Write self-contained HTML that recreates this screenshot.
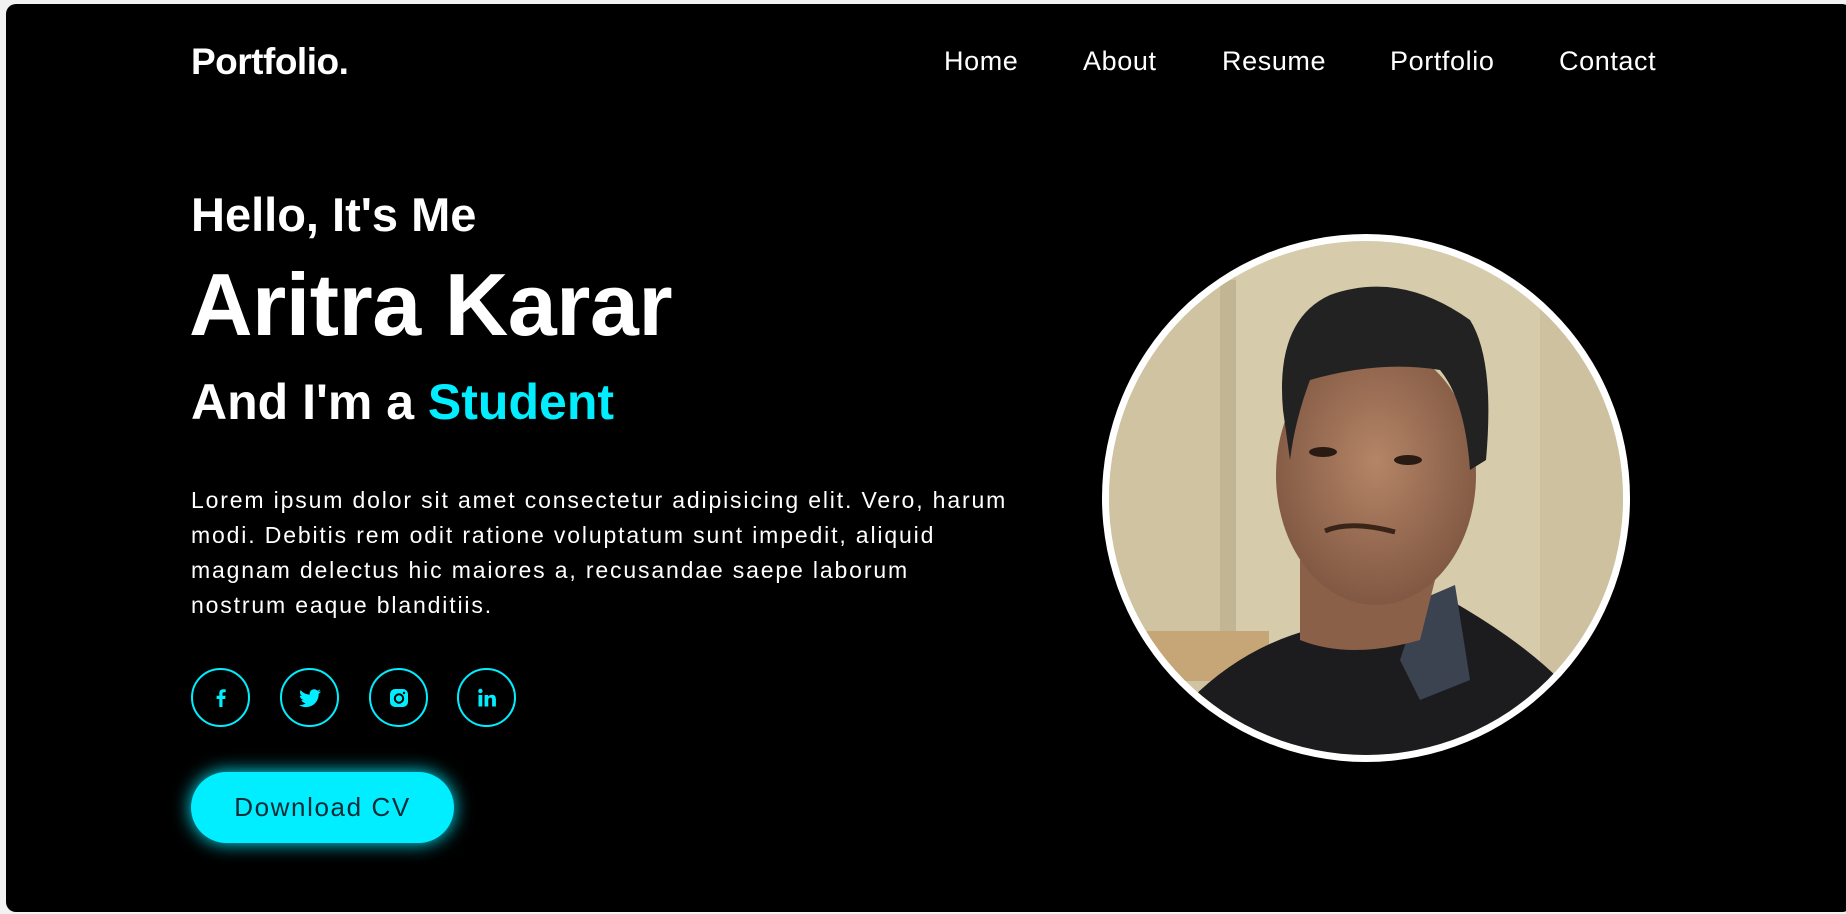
<!DOCTYPE html>
<html><head><meta charset="utf-8"><style>
*{margin:0;padding:0;box-sizing:border-box}
html,body{width:1846px;height:914px;overflow:hidden;background:#f2f2f2;font-family:"Liberation Sans",sans-serif}
.panel{position:absolute;left:6px;top:4px;width:1846px;height:908px;background:#000;border-radius:10px}
.t{position:absolute;color:#fff;white-space:nowrap}
.logo{left:191px;top:41px;font-size:37px;font-weight:700;letter-spacing:-0.5px}
.nav{top:46px;font-size:27px;letter-spacing:0.6px}
.hello{left:191px;top:187px;font-size:47px;font-weight:700}
.name{left:189px;top:254px;font-size:88px;font-weight:700;letter-spacing:-0.5px}
.role{left:191px;top:373px;font-size:50px;font-weight:700}
.role span{color:#0ef}
.para{left:191px;top:483px;font-size:23px;line-height:35px;letter-spacing:1.85px}
.ic{position:absolute;top:668px;width:59px;height:59px;border:2px solid #0ef;border-radius:50%;display:flex;align-items:center;justify-content:center;color:#0ef}
.btn{position:absolute;left:191px;top:772px;width:263px;height:71px;border-radius:36px;background:#0ef;box-shadow:0 0 18px #0ef;color:#0b2b38;font-size:26px;letter-spacing:1.6px;display:flex;align-items:center;justify-content:center}
</style></head><body>
<div class="panel"></div>
<div class="t logo">Portfolio.</div>
<div class="t nav" style="left:944px">Home</div>
<div class="t nav" style="left:1083px">About</div>
<div class="t nav" style="left:1222px">Resume</div>
<div class="t nav" style="left:1390px">Portfolio</div>
<div class="t nav" style="left:1559px">Contact</div>
<div class="t hello">Hello, It's Me</div>
<div class="t name">Aritra Karar</div>
<div class="t role">And I'm a <span>Student</span></div>
<div class="t para">Lorem ipsum dolor sit amet consectetur adipisicing elit. Vero, harum<br>modi. Debitis rem odit ratione voluptatum sunt impedit, aliquid<br>magnam delectus hic maiores a, recusandae saepe laborum<br>nostrum eaque blanditiis.</div>
<div class="ic" style="left:191px"><svg width="24" height="24" viewBox="0 0 24 24"><path fill="#0ef" d="M13.5 21v-8h2.7l.4-3.2h-3.1V7.8c0-.9.3-1.5 1.6-1.5h1.6V3.4c-.3 0-1.3-.1-2.4-.1-2.4 0-4 1.4-4 4.1v2.4H7.6V13h2.7v8z"/></svg></div>
<div class="ic" style="left:280px"><svg width="26" height="26" viewBox="0 0 24 24"><path fill="#0ef" d="M22 5.9c-.7.3-1.5.5-2.4.6.9-.5 1.5-1.3 1.8-2.3-.8.5-1.7.8-2.6 1-.8-.8-1.8-1.3-3-1.3-2.3 0-4.1 1.8-4.1 4.1 0 .3 0 .6.1.9C8.4 8.8 5.4 7.2 3.4 4.7c-.4.6-.6 1.3-.6 2.1 0 1.4.7 2.7 1.8 3.4-.7 0-1.3-.2-1.9-.5 0 2 1.4 3.7 3.3 4.1-.6.2-1.2.2-1.9.1.5 1.6 2 2.8 3.8 2.9-1.4 1.1-3.2 1.8-5.1 1.8H2c1.8 1.2 4 1.8 6.3 1.8 7.5 0 11.7-6.3 11.7-11.700v-.5c.8-.6 1.5-1.3 2-2.2z"/></svg></div>
<div class="ic" style="left:369px"><svg width="24" height="24" viewBox="0 0 24 24"><rect x="3" y="3" width="18" height="18" rx="5" fill="#0ef"/><circle cx="12" cy="12.5" r="4.2" fill="none" stroke="#000" stroke-width="2"/><circle cx="17" cy="7" r="1.2" fill="#000"/></svg></div>
<div class="ic" style="left:457px"><svg width="24" height="24" viewBox="0 0 24 24"><rect x="3.5" y="9" width="3.8" height="11.5" fill="#0ef"/><circle cx="5.4" cy="5" r="2.2" fill="#0ef"/><path fill="#0ef" d="M9.6 9h3.6v1.6c.6-1 1.9-1.9 3.7-1.9 3.3 0 4 2.1 4 4.9v6.9h-3.8v-6.1c0-1.4-.1-2.8-1.8-2.8s-2 1.3-2 2.7v6.2H9.6z"/></svg></div>
<div class="btn">Download CV</div>
<svg style="position:absolute;left:0;top:0" width="1846" height="914">
<defs><clipPath id="c"><circle cx="1366" cy="498" r="257"/></clipPath>
<radialGradient id="f" cx="0.5" cy="0.45" r="0.6"><stop offset="0" stop-color="#b58566"/><stop offset="1" stop-color="#7c5440"/></radialGradient></defs>
<circle cx="1366" cy="498" r="264" fill="#fff"/>
<g clip-path="url(#c)">
<rect x="1100" y="230" width="540" height="540" fill="#d6cbab"/>
<rect x="1100" y="230" width="136" height="540" fill="#cfc3a2"/>
<rect x="1220" y="280" width="16" height="400" fill="#c2b593"/>
<rect x="1540" y="230" width="100" height="540" fill="#cdc1a0"/>
<rect x="1147" y="631" width="122" height="50" fill="#c6a676"/>
<path d="M1190 700 Q1250 640 1330 625 L1450 600 Q1520 640 1560 680 L1600 780 L1150 780z" fill="#1c1c1e"/>
<path d="M1420 600 L1455 585 L1470 680 L1420 700 L1400 660z" fill="#3b4350"/>
<path d="M1300 560 L1300 640 Q1350 660 1420 640 L1440 560z" fill="#8b6048"/>
<ellipse cx="1376" cy="475" rx="100" ry="130" fill="url(#f)"/>
<path d="M1283 410 Q1275 320 1330 295 Q1400 270 1470 320 Q1495 360 1486 460 L1470 470 Q1465 400 1440 370 Q1380 360 1310 380 Q1295 420 1290 460z" fill="#222"/>
<ellipse cx="1323" cy="452" rx="14" ry="5" fill="#2a1a14"/>
<ellipse cx="1408" cy="460" rx="14" ry="5" fill="#2a1a14"/>
<path d="M1325 531 Q1350 520 1395 532" stroke="#3a2418" stroke-width="5" fill="none"/>
</g>
</svg>
</body></html>
